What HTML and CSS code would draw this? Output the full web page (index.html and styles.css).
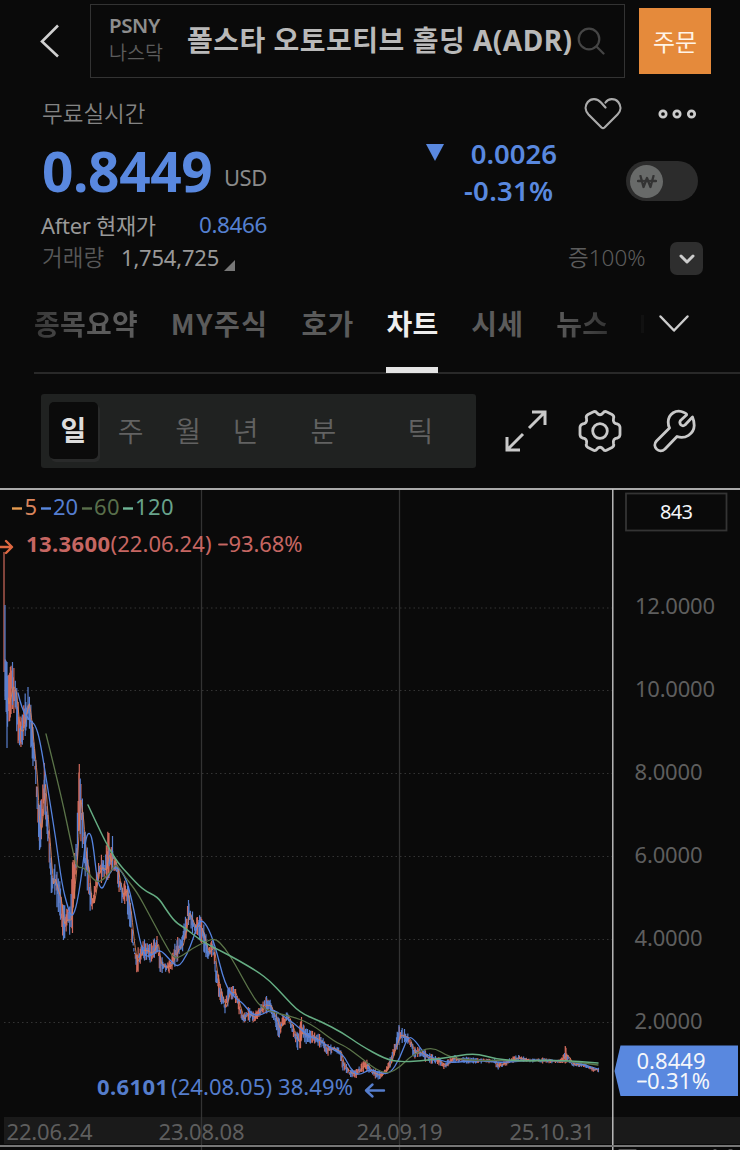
FILE: index.html
```html
<!DOCTYPE html>
<html lang="ko">
<head>
<meta charset="utf-8">
<title>폴스타 오토모티브 홀딩 A(ADR)</title>
<link rel="stylesheet" href="styles.css">
</head>
<body>
<header class="topbar">
  <svg class="back" width="22" height="36" viewBox="0 0 22 36"><path d="M19 2.500L3 18.500L19 33.500"/></svg>
  <div class="search">
    <div class="ticker"><b>PSNY</b><span>나스닥</span></div>
    <h1 class="name">폴스타 오토모티브 홀딩 A(ADR)</h1>
    <svg class="glass" width="28" height="28" viewBox="0 0 28 28"><circle cx="12" cy="12" r="10.300"/><path d="M19.500 19.500L26.500 26.500"/></svg>
  </div>
  <button class="order">주문</button>
</header>

<section class="quote">
  <div class="left">
    <div class="feed">무료실시간</div>
    <div class="price"><strong>0.8449</strong><span>USD</span></div>
    <div class="after"><span class="after-label">After 현재가</span><span class="after-price">0.8466</span></div>
    <div class="volume"><span class="vol-label">거래량</span><span class="vol-value">1,754,725</span><i class="corner"></i></div>
  </div>
  <div class="change">
    <div class="diff"><i class="down"></i><span>0.0026</span></div>
    <div class="rate">-0.31%</div>
  </div>
  <div class="right">
    <div class="actions">
      <svg width="38" height="34" viewBox="0 0 38 34"><path d="M21.500 10.500L17 5.500C13 1 7 1 3.800 5C0.500 9 1.200 14 4.500 17.500L17.500 30.500Q19 31.800 20.500 30.500L33.500 17.500C37 14 37.500 9 34.200 5C31 1.200 24.500 1 21.500 5.500"/></svg>
      <svg class="more" width="40" height="12" viewBox="0 0 40 12"><circle cx="6" cy="6" r="3.200"/><circle cx="20" cy="6" r="3.200"/><circle cx="34.500" cy="6" r="3.200"/></svg>
    </div>
    <div class="toggle"><div class="knob"><svg width="20" height="14" viewBox="0 0 20 14"><path d="M3.500 1L6.500 12L10 3L13.500 12L16.500 1M1 6H6M14 6H19M8 6H12"/></svg></div></div>
    <div class="margin"><span>증100%</span><div class="drop"><svg width="16" height="10" viewBox="0 0 16 10"><path d="M2 2L8 8L14 2"/></svg></div></div>
  </div>
</section>

<nav class="tabs">
  <span class="tab fade-left">종목요약</span><span class="tab my">MY주식</span><span class="tab">호가</span><span class="tab active">차트</span><span class="tab">시세</span><span class="tab fade-right">뉴스</span>
  <i class="next"></i>
  <svg class="expand" width="32" height="20" viewBox="0 0 32 20"><path d="M2.500 2.500L16 16.500L29.500 2.500"/></svg>
</nav>

<section class="tools">
  <div class="periods"><b>일</b><span>주</span><span>월</span><span>년</span><span class="wide">분</span><span class="widest">틱</span></div>
  <svg class="resize" width="44" height="44" viewBox="0 0 44 44"><path d="M28 3H41V16M41 3L25 19M3 28V41H16M3 41L19 25"/></svg>
  <svg class="gear" width="46" height="46" viewBox="0 0 46 46"><path d="M16 4Q18.500 2.500 20 5Q23 8.500 26 5Q27.500 2.500 30 4L35 6.500Q37.500 8 36.500 10.500Q35.500 15.500 40.500 16Q43 17 43 19.500V26.500Q43 29 40.500 30Q35.500 30.500 36.500 35.500Q37.500 38 35 39.500L30 42Q27.500 43.500 26 41Q23 37.500 20 41Q18.500 43.500 16 42L11 39.500Q8.500 38 9.500 35.500Q10.500 30.500 5.500 30Q3 29 3 26.500V19.500Q3 17 5.500 16Q10.500 15.500 9.500 10.500Q8.500 8 11 6.500Z"/><circle cx="23" cy="23" r="7.300"/></svg>
  <svg class="wrench" width="46" height="46" viewBox="0 0 46 46"><path d="M32 4.500C24 .5 16.500 6 16.200 14Q16.200 17.500 17.500 20L4.500 33C-.5 38.500 7 46.500 13 41L25 28.500C33 31.500 42 26 42.200 17.500Q42 12.500 40.500 9L33 17Q31 18.500 29 17Q27 15 28.500 12.500L34.500 7Q35 5.500 32 4.500Z"/></svg>
</section>

<svg class="chart" width="740" height="662" viewBox="0 488 740 662">
  <rect class="band" x="4" y="1117" width="736" height="27"/>
  <path class="vgrid" d="M201.500 490V1150M399.500 490V1150"/>
  <path class="hgrid" d="M4 608H612M4 690.500H612M4 773.500H612M4 856.500H612M4 939.500H612M4 1022.500H612"/>
  <path id="rises" class="bars red"/>
  <path id="falls" class="bars blue"/>
  <path id="fast" class="ma ma5"/>
  <path class="ma ma20" id="ma20"/>
  <path class="ma ma60" id="ma60"/>
  <path class="ma ma120" id="ma120"/>
  <path class="frame" d="M0 489H740"/>
  <path class="axis" d="M612.800 490V1150"/>
  <path class="bottom" d="M0 1146H740"/>
  <path class="legend-dash ma5c" d="M12 508.500H22"/><path class="legend-dash ma20c" d="M41 508.500H51"/><path class="legend-dash ma60c" d="M82 508.500H92"/><path class="legend-dash ma120c" d="M123 508.500H133"/>
  <text class="t f5" x="24.500" y="515" textLength="12">5</text>
  <text class="t f20" x="53" y="515" textLength="25">20</text>
  <text class="t f60" x="94" y="515" textLength="25.500">60</text>
  <text class="t f120" x="135" y="515" textLength="38.500">120</text>
  <path class="arrow high" d="M0 547H11.500M6 541L12 547L6 553"/>
  <text class="t hi bold" x="26" y="552" textLength="84">13.3600</text>
  <text class="t hi" x="110.500" y="552" textLength="101">(22.06.24)</text>
  <path class="dash-hi" d="M219 544.500H227"/>
  <text class="t hi" x="228.500" y="552" textLength="74">93.68%</text>
  <text class="t lo bold" x="97" y="1095" textLength="71">0.6101</text>
  <text class="t lo" x="171" y="1095" textLength="101">(24.08.05)</text>
  <text class="t lo" x="278" y="1095" textLength="75">38.49%</text>
  <path class="arrow low" d="M384 1090.500H366M372.500 1084.500L366 1090.500L372.500 1096.500"/>
  <rect class="count" x="626" y="493.500" width="100.500" height="37"/>
  <text class="white count-text" x="660" y="519" textLength="33">843</text>
  <g class="t gray">
    <text x="635" y="614" textLength="80">12.0000</text><text x="635" y="696.500" textLength="80">10.0000</text>
    <text x="634.500" y="779.500" textLength="68">8.0000</text><text x="634.500" y="862.500" textLength="68">6.0000</text>
    <text x="634.500" y="945.500" textLength="68">4.0000</text><text x="634.500" y="1028.500" textLength="68">2.0000</text>
    <text x="6.500" y="1140" textLength="86">22.06.24</text><text x="158.500" y="1140" textLength="86">23.08.08</text>
    <text x="356.500" y="1140" textLength="86">24.09.19</text><text x="509.500" y="1140" textLength="85">25.10.31</text>
  </g>
  <path class="tag" d="M614.500 1071L620.500 1045.500H738V1096H620.500Z"/>
  <path class="dash-white" d="M638 1081.500H646"/>
  <text class="t white"><tspan x="636.500" y="1069" textLength="69">0.8449</tspan><tspan x="647" y="1089" textLength="63">0.31%</tspan></text>
  <path class="remnant" d="M619 1149.500H636M714 1149.500H716M729 1149.500H732"/>
</svg>
<script src="chart.js"></script>
</body>
</html>
```
FILE: styles.css
```css
* { box-sizing: border-box; }
body {
  margin: 0; width: 740px; height: 1150px; overflow: hidden;
  background: #0a0a0a; color: #aaa;
  font-family: "Noto Sans", "Noto Sans CJK KR", sans-serif;
  white-space: nowrap;
}
svg { display: block; flex: none; fill: none; stroke-linecap: round; stroke-linejoin: round; }

.topbar { display: flex; height: 88px; padding: 4px 0 0 39px; }
.back { margin-top: 19px; stroke: #d0d0d0; stroke-width: 2.6; stroke-linecap: butt; stroke-linejoin: miter; }
.search { display: flex; width: 535px; height: 74px; margin-left: 29px; border: 1px solid #333; }
.ticker { display: flex; flex-direction: column; width: 78px; margin-left: 18px; padding-top: 7px; font-size: 19.5px; line-height: 27px; }
.ticker b { color: #8e8e8e; font-size: 20.5px; font-weight: 600; letter-spacing: -.4px; }
.ticker span { color: #5c5c5c; font-weight: 350; }
.name { width: 390px; margin: 0; color: #b9b9b9; font-size: 28px; font-weight: 700; line-height: 71px; letter-spacing: .5px; }
.glass { margin-top: 22px; stroke: #454545; stroke-width: 2.2; }
.order { width: 72px; height: 66px; margin: 4px 0 0 14px; padding: 0; border: 0; background: #e58a3b; color: #fff4e8; font: 24px/66px "Noto Sans CJK KR", sans-serif; }

.quote { display: flex; height: 206px; padding-left: 42px; }
.left { width: 328px; }
.feed { height: 52px; color: #848484; font-size: 22.5px; line-height: 52px; font-weight: 350; }
.price { display: flex; height: 66px; }
.price strong { width: 182px; color: #5988df; font-size: 55px; line-height: 62px; letter-spacing: -.4px; }
.price span { color: #8b8b8b; font-size: 22px; line-height: 75px; letter-spacing: -.5px; }
.after { display: flex; height: 35px; line-height: 38px; margin-left: -1px; }
.after-label { width: 158px; color: #999; font-size: 22px; letter-spacing: -.3px; }
.after-price { color: #5580d0; font-size: 22.5px; letter-spacing: -.4px; }
.volume { display: flex; line-height: 33px; font-size: 22px; }
.vol-label { width: 79px; color: #585858; font-size: 22.5px; font-weight: 350; }
.vol-value { width: 103px; color: #999; letter-spacing: -.2px; }
.corner { width: 11px; height: 11px; margin-top: 19px; background: #777; clip-path: polygon(100% 0, 100% 100%, 0 100%); }
.change { width: 200px; padding-top: 47px; color: #5988df; font-size: 27.5px; font-weight: 600; line-height: 37px; }
.diff { display: flex; align-items: center; justify-content: space-between; width: 187px; padding-left: 56px; }
.down { width: 18px; height: 17px; margin-top: -2px; background: #5988df; clip-path: polygon(0 0, 100% 0, 50% 100%); }
.rate { padding-left: 94px; letter-spacing: .3px; }
.right { padding-left: 14px; }
.actions { display: flex; align-items: center; gap: 35px; height: 52px; stroke: #aaa; stroke-width: 2.2; }
.more { stroke: #ccc; stroke-width: 2.7; }
.toggle { width: 72px; height: 40px; margin: 21px 0 0 42px; padding: 4px; border-radius: 20px; background: #2c2c2c; }
.knob { display: flex; align-items: center; justify-content: center; width: 33px; height: 33px; border-radius: 50%; background: #686a69; stroke: #333; stroke-width: 2.3; }
.margin { display: flex; height: 34px; margin: 40px 0 0 -16px; color: #5c5c5c; font-size: 22.5px; font-weight: 350; line-height: 34px; }
.margin span { width: 102px; }
.drop { display: flex; align-items: center; justify-content: center; width: 33px; height: 33px; margin-top: 1px; border-radius: 7px; background: #2e2e2e; stroke: #ccc; stroke-width: 3; }

.tabs { display: flex; height: 80px; margin-left: 34px; border-bottom: 2px solid #292929; font: 700 28px/59px "Noto Sans CJK KR", sans-serif; letter-spacing: .2px; color: #5b5b5b; }
.tab { height: 79px; margin-right: 33px; }
.my { letter-spacing: 1.5px; }
.active { color: #eee; border-bottom: 6px solid #e4e4e4; }
.fade-left { background: linear-gradient(90deg, #363636, #5b5b5b 60%); color: transparent; -webkit-background-clip: text; background-clip: text; }
.fade-right { background: linear-gradient(90deg, #5b5b5b, #333); color: transparent; -webkit-background-clip: text; background-clip: text; }
.next { width: 3px; height: 18px; margin-top: 21px; background: #111; }
.expand { margin: 20px 0 0 14px; stroke: #ccc; stroke-width: 2.5; }

.tools { display: flex; align-items: center; height: 114px; padding: 0 0 0 41px; stroke: #c9c9c9; stroke-width: 3; }
.periods { display: flex; align-items: center; width: 435px; height: 74px; padding: 0 0 2px 8px; background: #202221; border-radius: 3px; stroke: none; font: 350 28px/54px "Noto Sans CJK KR", sans-serif; color: #626262; text-align: center; }
.periods b { width: 49px; height: 57px; margin-right: 4px; border-radius: 5px; background: #0b0b0b; box-shadow: 2px 3px 0 #292a2a; color: #ddd; font-weight: 700; }
.periods span { width: 57.5px; }
.periods .wide { width: 98px; }
.periods .widest { width: 96px; }
.resize { margin-left: 27.5px; stroke-linecap: butt; stroke-linejoin: miter; }
.gear { margin-left: 29px; stroke-width: 2.8; }
.wrench { margin-left: 29px; stroke-width: 2.8; }

.chart { font-family: "Noto Sans", sans-serif; }
.band { fill: #1a1a1a; }
.vgrid { stroke: #333; stroke-width: 1.3; }
.hgrid { stroke: #343434; stroke-width: 1.2; stroke-dasharray: 1.5 3; stroke-linecap: butt; }
.bars { stroke-width: 1.2; stroke-linecap: butt; }
.blue { stroke: #597fce; }
.red { stroke: #d06a5c; }
.ma { stroke-width: 1.3; }
.ma5 { stroke: #db8058; stroke-width: .9; }
.ma20 { stroke: #5684df; }
.ma60 { stroke: #5b7449; }
.ma120 { stroke: #65ad83; stroke-width: 1.5; }
.frame { stroke: #aaa; stroke-width: 2; }
.axis { stroke: #d2d2d2; stroke-width: 1.3; }
.bottom { stroke: #777; stroke-width: 2; }
.legend-dash { stroke-width: 2.4; stroke-linecap: butt; }
.ma5c { stroke: #e69b50; }
.ma20c { stroke: #5988df; }
.ma60c { stroke: #596f4b; }
.ma120c { stroke: #6fb596; }
.t { font-size: 22px; }
.f5 { fill: #d8845c; }
.f20 { fill: #557ed0; }
.f60 { fill: #596f4b; }
.f120 { fill: #68a38b; }
.hi { fill: #c66662; }
.lo { fill: #557dcc; }
.bold { font-weight: 700; }
.dash-hi { stroke: #c66662; stroke-width: 1.8; }
.arrow { stroke-width: 2.4; }
.high { stroke: #df6841; }
.low { stroke: #557dcc; }
.gray { fill: #5e5e5e; }
.count { stroke: #343434; stroke-width: 1.8; stroke-linejoin: miter; }
.count-text { font-size: 20px; }
.white { fill: #f4f6fa; }
.tag { fill: #5988df; }
.dash-white { stroke: #f4f6fa; stroke-width: 1.8; }
.remnant { stroke: #555; stroke-width: 1; }
```
FILE: chart.js
```js
// Price range samples along the time axis: x, top, bottom.
const range = [
  4,552,672, 5,605,700, 7,662,748, 9,680,720, 12,662,710, 15,672,712, 17,693,730, 19,712,748, 22,720,743,
  25,695,735, 28,687,720, 30,700,735, 33,730,765, 36,760,795, 38,800,840, 40,810,850, 42,795,830, 44,765,800,
  46,790,825, 49,830,860, 52,870,900, 54,858,900, 57,875,905, 60,885,915, 63,910,938, 66,905,935, 70,908,932,
  73,860,925, 75,850,895, 77,820,870, 79,764,830, 82,795,840, 84,820,865, 86,845,880, 88,850,890, 90,885,910,
  93,892,914, 96,875,895, 98,862,885, 101,855,880, 105,860,880, 108,833,875, 110,855,870, 112,836,875,
  115,855,870, 118,867,885, 122,885,905, 126,880,900, 130,895,930, 133,930,955, 136,950,974, 140,945,965,
  143,940,960, 147,942,960, 151,945,962, 157,936,952, 160,955,972, 165,963,972, 170,960,972, 175,945,965,
  178,938,960, 182,935,955, 186,910,940, 188,900,925, 192,912,930, 195,920,938, 198,915,935, 201,918,940,
  205,930,955, 208,945,960, 213,940,955, 216,960,985, 220,985,1000, 225,1000,1014, 229,985,1002,
  234,986,998, 238,995,1010, 243,1015,1023, 248,1008,1020, 254,1012,1023, 259,1005,1018, 265,998,1012,
  270,1000,1012, 275,1010,1025, 279,1020,1038, 285,1010,1028, 288,1012,1022, 293,1025,1035, 298,1035,1050,
  301,1020,1045, 307,1030,1042, 315,1033,1043, 322,1036,1048, 327,1045,1056, 333,1045,1052, 340,1048,1056,
  343,1058,1072, 350,1070,1076, 356,1070,1078, 362,1062,1072, 367,1060,1070, 372,1068,1077, 380,1072,1079,
  386,1068,1073, 390,1058,1068, 394,1045,1056, 399,1026,1045, 404,1030,1042, 409,1035,1044, 414,1048,1058,
  420,1048,1056, 427,1052,1062, 432,1055,1063, 438,1057,1064, 445,1062,1070, 452,1055,1062, 460,1056,1063,
  470,1058,1063, 495,1059,1063, 497,1063,1070, 510,1058,1064, 517,1055,1061, 530,1059,1062, 542,1058,1063,
  560,1060,1063, 565,1047,1063, 568,1052,1062, 572,1062,1066, 585,1064,1067, 592,1067,1071, 599,1068,1072
];
const sample = (x) => {
  let i = 0;
  while (i < range.length - 6 && range[i + 3] < x) i += 3;
  const k = (x - range[i]) / (range[i + 3] - range[i]);
  return [range[i + 1] + k * (range[i + 4] - range[i + 1]), range[i + 2] + k * (range[i + 5] - range[i + 2])];
};
let seed = 7;
const rand = () => (seed = (seed * 16807) % 2147483647) / 2147483647;
// Full wicks at the main extremes: x, top, bottom.
let up = "M4 552V672M22.300 718V744M44.300 763V800M79.300 764V830M109 833V878M157 936V952M301.500 1017V1040M565.500 1047V1062";
let down = "M5 605V700M7 662V748M12.500 662V705M28 687V720M39.500 805V850M63.500 905V940M112.500 836V870M188.500 900V925M266.500 996V1012M399 1025V1045M404.500 1029V1042";
let fast = "";
for (let i = 2; i < 843; i++) {
  const x = 4 + i * 0.706;
  const [top, bottom] = sample(x);
  const before = sample(Math.max(4, x - 1.5)), after = sample(Math.min(598, x + 1.5));
  const slope = (after[0] + after[1] - before[0] - before[1]) / 2;
  const h = bottom - top;
  const spike = rand() > 0.82 ? -0.12 : 0.5;
  const a = top + h * spike * rand(), b = bottom - h * spike * rand();
  const bar = `M${x.toFixed(2)} ${a.toFixed(1)}V${b.toFixed(1)}`;
  if (rand() < (slope < 0 ? 0.68 : 0.4)) up += bar; else down += bar;
  if (i > 5) fast += `${fast ? "L" : "M"}${x.toFixed(2)} ${((before[0] + before[1]) / 2).toFixed(1)}`;
}
const set = (id, d) => document.getElementById(id).setAttribute("d", d);
set("rises", up);
set("falls", down);
set("fast", fast);

// Joins points with quadratic curves through their midpoints.
const curve = (p) => {
  let d = `M${p[0]} ${p[1]}`;
  for (let i = 2; i < p.length - 2; i += 2) {
    d += `Q${p[i]} ${p[i + 1]} ${(p[i] + p[i + 2]) / 2} ${(p[i + 1] + p[i + 3]) / 2}`;
  }
  return d + `L${p[p.length - 2]} ${p[p.length - 1]}`;
};
set("ma20", curve([18,693, 22,710, 30,721, 35,724, 40,740, 48,790, 56,840, 62,885, 68,908, 72,918, 77,905, 83,865,
  86,836, 90,832, 93,843, 97,880, 102,891, 107,878, 115,865, 125,875, 132,900, 140,942, 145,957, 152,955, 160,949,
  170,960, 178,968, 187,955, 194,936, 200,919, 207,925, 215,945, 225,985, 235,998, 243,1003, 252,1015, 262,1015,
  272,1009, 282,1015, 295,1024, 308,1036, 320,1040, 333,1050, 343,1054, 350,1068, 358,1076, 370,1069, 380,1073,
  390,1074, 400,1058, 408,1036, 415,1040, 425,1055, 440,1060, 450,1063, 480,1060, 500,1063, 530,1060, 570,1061, 585,1065, 598,1069]));
set("ma60", curve([46,734, 60,790, 73,852, 77,868, 84,867, 95,882, 102,881, 112,870, 116,863, 125,877, 137,892,
  150,916, 165,944, 174,959, 182,956, 193,948, 205,942, 215,938, 225,948, 235,964, 248,988, 260,1007, 275,1013,
  290,1016, 310,1023, 335,1042, 345,1046, 360,1057, 375,1069, 388,1074, 400,1067, 412,1055, 432,1046, 450,1058,
  480,1061, 500,1060, 525,1061, 560,1060, 598,1065]));
set("ma120", curve([88,805, 101,833, 110,850, 118,863, 128,874, 143,890, 158,897, 165,908, 175,922, 185,928, 195,936,
  205,943, 217,949, 238,960, 258,972, 270,981, 283,995, 300,1013, 320,1021, 343,1033, 360,1045, 385,1059,
  400,1062, 420,1061, 445,1058, 475,1053, 495,1059, 520,1061, 560,1060, 598,1063]));
```
